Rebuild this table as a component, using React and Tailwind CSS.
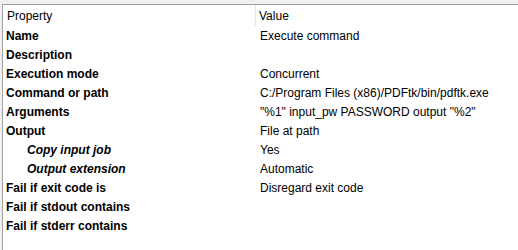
import React from 'react'

const rows = [
  { label: 'Name', value: 'Execute command' },
  { label: 'Description', value: '' },
  { label: 'Execution mode', value: 'Concurrent' },
  { label: 'Command or path', value: 'C:/Program Files (x86)/PDFtk/bin/pdftk.exe' },
  { label: 'Arguments', value: '"%1" input_pw PASSWORD output "%2"' },
  { label: 'Output', value: 'File at path' },
  { label: 'Copy input job', value: 'Yes', sub: true },
  { label: 'Output extension', value: 'Automatic', sub: true },
  { label: 'Fail if exit code is', value: 'Disregard exit code' },
  { label: 'Fail if stdout contains', value: '' },
  { label: 'Fail if stderr contains', value: '' },
]

export default function App() {
  return (
    <div className="w-[518px] h-[250px] bg-[#f0f0f0] pt-[4px] pl-[2px] overflow-hidden">
      <div className="h-full border-t border-l border-[#a0a0a0] bg-white text-black">
        <div className="flex h-[21px] items-center font-['Liberation_Sans',sans-serif] text-[12px]">
          <div className="w-[253px] pl-[4px] border-r border-[#e5e5e5] h-full flex items-center">Property</div>
          <div className="pl-[3px]">Value</div>
        </div>
        {rows.map((r, i) => (
          <div key={i} className="flex h-[19px] items-center">
            <div
              className={`w-[253px] font-['Liberation_Sans',sans-serif] font-bold text-[12px] ${
                r.sub ? 'pl-[24px] italic' : 'pl-[3px]'
              }`}
            >
              {r.label}
            </div>
            <div className="pl-[4px] font-['Liberation_Sans',sans-serif] text-[12px]">{r.value}</div>
          </div>
        ))}
      </div>
    </div>
  )
}
